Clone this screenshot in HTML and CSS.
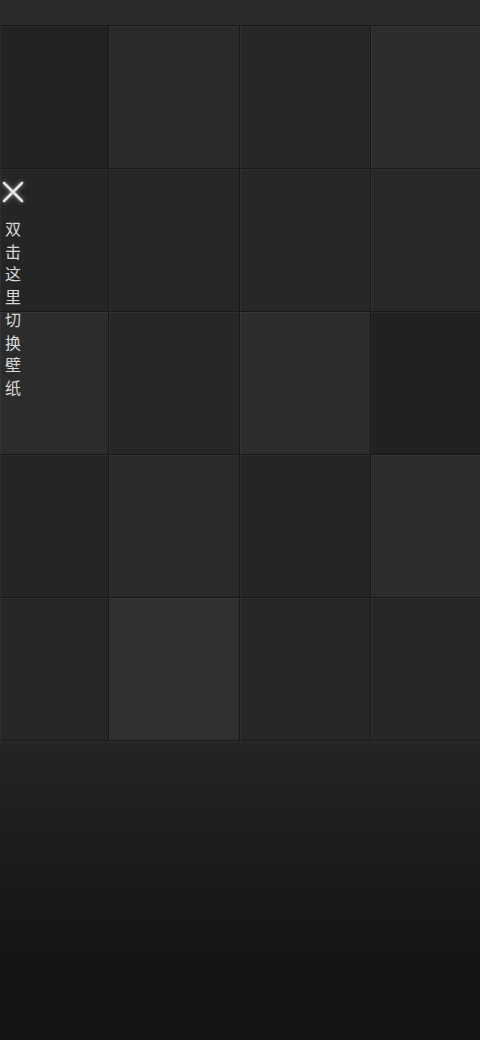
FILE: index.html
```html
<!DOCTYPE html>
<html lang="zh">
<head>
<meta charset="utf-8">
<link rel="stylesheet" href="styles.css">
</head>
<body>
<div class="screen">
  <div class="topbar"></div>
  <div class="grid">
    <div class="tile t1"></div><div class="tile t2"></div><div class="tile t3"></div><div class="tile t4"></div>
    <div class="tile t5"></div><div class="tile t6"></div><div class="tile t7"></div><div class="tile t8"></div>
    <div class="tile t9"></div><div class="tile t10"></div><div class="tile t11"></div><div class="tile t12"></div>
    <div class="tile t13"></div><div class="tile t14"></div><div class="tile t15"></div><div class="tile t16"></div>
    <div class="tile t17"></div><div class="tile t18"></div><div class="tile t19"></div><div class="tile t20"></div>
  </div>
  <div class="bottom"></div>
  <div class="hint">
    <svg class="close" width="24" height="24" viewBox="0 0 24 24">
      <path d="M3 3 L21 21 M21 3 L3 21" stroke="#e6e6e6" stroke-width="2.6" stroke-linecap="round" fill="none"/>
    </svg>
    <div class="hint-text">双<br>击<br>这<br>里<br>切<br>换<br>壁<br>纸</div>
  </div>
</div>
</body>
</html>
```
FILE: styles.css
```css
html, body {
  margin: 0;
  padding: 0;
  background: #141414;
}
.screen {
  position: relative;
  width: 480px;
  height: 1040px;
  overflow: hidden;
  display: flex;
  flex-direction: column;
  font-family: "Noto Sans CJK SC", "Noto Sans", sans-serif;
}
.topbar {
  height: 25px;
  background: #2a2a2a;
  flex: none;
}
.grid {
  flex: none;
  display: grid;
  grid-template-columns: 108px 130px 130px 109px;
  grid-template-rows: repeat(5, 142px);
  gap: 1px;
  background: #181818;
  border-top: 1px solid #181818;
  border-bottom: 1px solid #1a1a1a;
}
.tile {
  box-shadow: inset 1px 1px 0 rgba(255,255,255,0.045);
}
.t1 { background: #222222; }
.t2 { background: #2a2a2a; }
.t3 { background: #272727; }
.t4 { background: #2d2d2d; }
.t5 { background: #252525; }
.t6 { background: #262626; }
.t7 { background: #272727; }
.t8 { background: #292929; }
.t9 { background: #2c2c2c; }
.t10 { background: #272727; }
.t11 { background: #2d2d2d; }
.t12 { background: #212121; }
.t13 { background: #252525; }
.t14 { background: #2a2a2a; }
.t15 { background: #252525; }
.t16 { background: #2c2c2c; }
.t17 { background: #262626; }
.t18 { background: #303030; }
.t19 { background: #262626; }
.t20 { background: #272727; }
.bottom {
  flex: 1;
  background: linear-gradient(#242424 0%, #1b1b1b 40%, #141414 75%, #131313 100%);
  box-shadow: inset 0 1px 0 rgba(255,255,255,0.05);
}
.hint {
  position: absolute;
  left: 1px;
  top: 180px;
  width: 24px;
  display: flex;
  flex-direction: column;
  align-items: center;
}
.close {
  filter: drop-shadow(0 0 2px rgba(255,255,255,0.5));
}
.hint-text {
  margin-top: 13px;
  color: #d8d8d8;
  font-size: 16px;
  line-height: 22.7px;
  text-align: center;
}
```
